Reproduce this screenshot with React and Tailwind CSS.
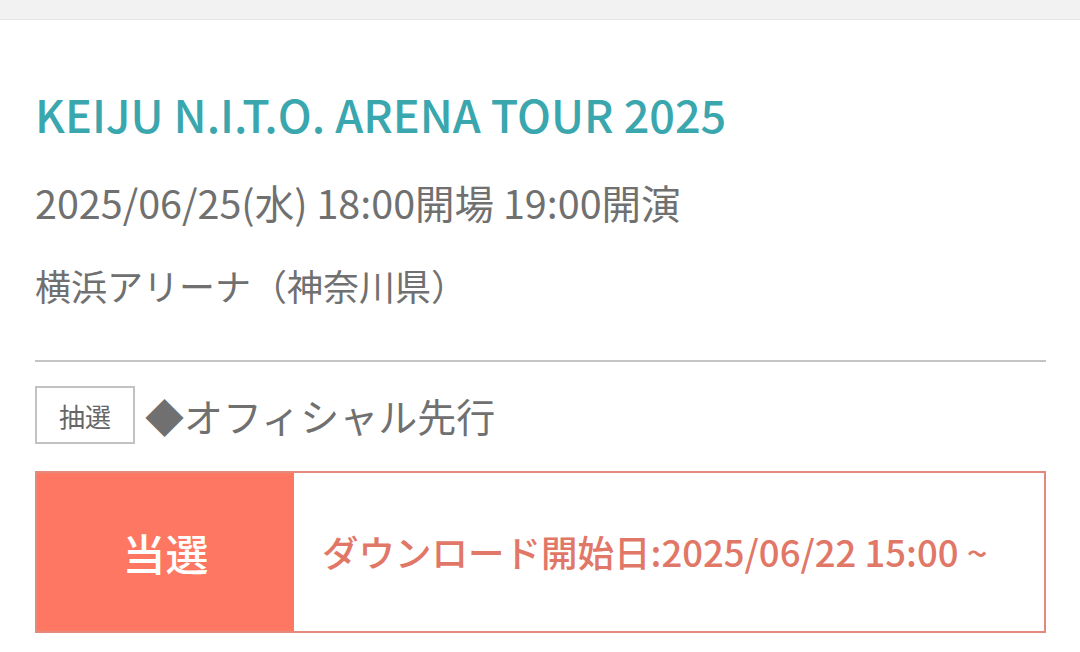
export default function App() {
  return (
    <div
      className="min-h-[652px] w-[1080px] overflow-hidden bg-white"
      style={{ fontFamily: '"Noto Sans CJK JP", "Noto Sans", sans-serif' }}
    >
      {/* Top band */}
      <div className="h-[20px] border-b border-[#e6e6e6] bg-[#f2f2f2]" />

      <div className="px-[35px]">
        {/* Event info */}
        <h1 className="mt-[66px] text-[45px] font-medium leading-[56px] text-[#3aa6ad]">
          KEIJU N.I.T.O. ARENA TOUR 2025
        </h1>
        <p className="mt-[37px] text-[39.5px] leading-[46px] text-[#707070]">
          2025/06/25(水) 18:00開場 19:00開演
        </p>
        <p className="mt-[37px] text-[36px] leading-[46px] text-[#707070]">
          横浜アリーナ（神奈川県）
        </p>

        <div className="mt-[52px] h-[2px] w-[1011px] bg-[#c4c4c4]" />

        {/* Sale type */}
        <div className="mt-[24px] flex items-center gap-[10px]">
          <div className="flex h-[58px] w-[100px] items-center justify-center border-2 border-[#c2c2c2] text-[26px] text-[#666666]">
            抽選
          </div>
          <p className="text-[39px] leading-[46px] text-[#707070]">◆オフィシャル先行</p>
        </div>

        {/* Result */}
        <div className="mt-[27px] flex h-[162px] w-[1011px] border-2 border-[#e38a7c]">
          <div className="flex w-[257px] items-center justify-center bg-[#fd7762] text-[43px] font-medium text-white">
            当選
          </div>
          <div className="flex flex-1 items-center pl-[28px] text-[36.5px] font-medium text-[#e17767]">
            ダウンロード開始日:2025/06/22 15:00 ~
          </div>
        </div>
      </div>
    </div>
  );
}
